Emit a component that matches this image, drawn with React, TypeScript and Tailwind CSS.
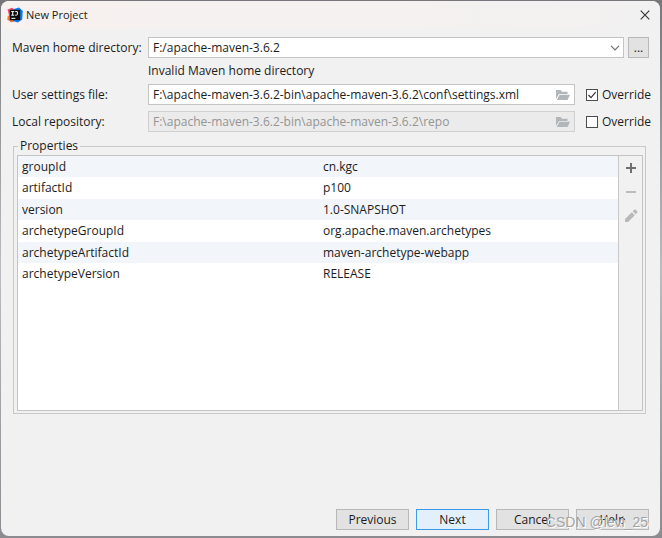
import { useState } from "react";
import type { ReactNode } from "react";
import { clsx } from "clsx";

const properties = [
  { name: "groupId", value: "cn.kgc" },
  { name: "artifactId", value: "p100" },
  { name: "version", value: "1.0-SNAPSHOT" },
  { name: "archetypeGroupId", value: "org.apache.maven.archetypes" },
  { name: "archetypeArtifactId", value: "maven-archetype-webapp" },
  { name: "archetypeVersion", value: "RELEASE" },
];

function AppLogo() {
  return (
    <svg viewBox="0 0 16 16" className="h-4 w-4" aria-hidden="true">
      <path d="M.5 2.5 5 .8 8 3v11l-3.5 1.2L.5 12.5 2 8z" fill="#f9456b" />
      <path d="M.5 9.5 3 8l4 6-2.5 1.2-4-2.7z" fill="#f9772e" />
      <path d="M7 2 12 .5l3.8 3.4-.6 8.6-4.4 3L6 14z" fill="#087cfa" />
      <rect x="2.8" y="2.8" width="10.4" height="10.4" fill="#0a0a0a" />
      <path d="M4.2 4.6h3M5.7 4.6v3.6M4.2 8.2h3M8.2 4.6h2.2v2.6q0 1-1.1 1H8.2M4.4 11.3h4" stroke="#fff" strokeWidth="1" fill="none" />
    </svg>
  );
}

function FolderIcon() {
  return (
    <svg viewBox="0 0 14 12" className="h-3 w-3.5" fill="#b1b6ba" aria-hidden="true">
      <path d="M0 10V1h4.5L6 2.7h5.5V5H3z" />
      <path d="M3.5 5.8H14L11.5 11H.8z" />
    </svg>
  );
}

function PathField({ id, label, path, initial }: { id: string; label: string; path: string; initial: boolean }) {
  const [override, setOverride] = useState(initial);

  return (
    <div className="flex items-center">
      <label htmlFor={id} className="w-[136px] shrink-0">
        {label}
      </label>
      <div
        className={clsx(
          "flex h-[21px] min-w-0 flex-1 items-center border pr-1",
          override ? "border-[#c4c4c4] bg-white" : "border-[#d0d0d0] bg-[#ebebeb]"
        )}
      >
        <input
          id={id}
          type="text"
          defaultValue={path}
          disabled={!override}
          className="h-full min-w-0 flex-1 bg-transparent pl-1 outline-none disabled:text-[#949494]"
        />
        <button type="button" aria-label="Browse">
          <FolderIcon />
        </button>
      </div>
      <label className="ml-[11px] flex w-[63px] shrink-0 items-center gap-1">
        <span className="grid shrink-0">
          <input
            type="checkbox"
            checked={override}
            onChange={(e) => setOverride(e.target.checked)}
            className="peer col-start-1 row-start-1 h-3 w-3 appearance-none border border-[#4c4c4c] bg-white"
          />
          <svg viewBox="0 0 12 12" className="pointer-events-none invisible col-start-1 row-start-1 h-3 w-3 peer-checked:visible">
            <path d="M2.5 6 5 8.7 9.7 3.2" fill="none" stroke="#333" strokeWidth="1.2" />
          </svg>
        </span>
        Override
      </label>
    </div>
  );
}

function ToolButton({ label, disabled, children }: { label: string; disabled?: boolean; children: ReactNode }) {
  return (
    <button type="button" aria-label={label} disabled={disabled} className="flex h-6 w-full items-center justify-center">
      <svg viewBox="0 0 14 14" className="h-3.5 w-3.5" aria-hidden="true">
        {children}
      </svg>
    </button>
  );
}

function DialogButton({ primary, children }: { primary?: boolean; children: ReactNode }) {
  return (
    <button
      type="button"
      className={clsx(
        "h-[21px] w-[73px] border",
        primary ? "border-[#3c9be8] bg-[#e2f0fb]" : "border-[#b8b8b8] bg-[#e2e2e2]"
      )}
    >
      {children}
    </button>
  );
}

export default function App() {
  return (
    <div className="flex min-h-screen bg-linear-to-b from-[#77777b] via-[#b9bcc0] to-[#8b8b90] pt-px pr-0.5 pb-0.5 pl-px font-['Open_Sans','Noto_Sans',sans-serif] text-xs leading-4 text-[#1c1c1c]">
      <div className="relative flex flex-1 flex-col overflow-hidden rounded-lg bg-[#f1f1f1]">
        <header className="flex h-7 items-center bg-linear-to-r from-[#f7f1ef] to-[#f2f1f1] pr-2.5 pl-1.5">
          <AppLogo />
          <h1 className="ml-[3px] flex-1 text-[11px] font-normal">New Project</h1>
          <button type="button" aria-label="Close">
            <svg viewBox="0 0 10 10" className="h-2.5 w-2.5" stroke="#333" strokeWidth="1.1">
              <path d="M.7.7 9.3 9.3M9.3.7.7 9.3" />
            </svg>
          </button>
        </header>

        <main className="flex flex-1 flex-col pt-2 pr-[11px] pb-1.5 pl-[11px]">
          <div className="flex items-center">
            <label htmlFor="maven-home" className="w-[136px] shrink-0">
              Maven home directory:
            </label>
            <div className="grid min-w-0 flex-1 items-center">
              <select
                id="maven-home"
                className="col-start-1 row-start-1 h-[21px] w-full appearance-none border border-[#c4c4c4] bg-white pl-1 outline-none"
              >
                <option>F:/apache-maven-3.6.2</option>
              </select>
              <svg viewBox="0 0 10 6" className="pointer-events-none col-start-1 row-start-1 mr-1 h-1.5 w-2.5 justify-self-end">
                <path d="M1 .8 5 4.8 9 .8" fill="none" stroke="#707070" strokeWidth="1.2" />
              </svg>
            </div>
            <button type="button" aria-label="Choose directory" className="ml-1 h-[21px] w-[21px] border border-[#b8b8b8] bg-[#e2e2e2]">
              ...
            </button>
          </div>
          <p className="my-[5px] ml-[136px]">Invalid Maven home directory</p>

          <div className="flex flex-col gap-1.5">
            <PathField
              id="settings-file"
              label="User settings file:"
              path="F:\apache-maven-3.6.2-bin\apache-maven-3.6.2\conf\settings.xml"
              initial={true}
            />
            <PathField
              id="local-repo"
              label="Local repository:"
              path="F:\apache-maven-3.6.2-bin\apache-maven-3.6.2\repo"
              initial={false}
            />
          </div>

          <fieldset className="mt-1.5 mr-[3px] ml-px border border-[#c8c8c8] pt-px pr-0.5 pb-0.5 pl-[3px]">
            <legend className="ml-px px-0.5">Properties</legend>
            <div className="flex min-h-64 border border-[#c4c4c4] bg-white">
              <div className="flex-1">
                <table className="w-full table-fixed border-collapse">
                  <tbody>
                    {properties.map((p) => (
                      <tr key={p.name} className="h-[21px] odd:bg-[#f2f5fa] even:h-[22px]">
                        <th scope="row" className="py-0 pl-1 text-left font-normal">
                          {p.name}
                        </th>
                        <td className="py-0 pl-[5px]">{p.value}</td>
                      </tr>
                    ))}
                  </tbody>
                </table>
              </div>
              <div className="w-6 border-l border-[#c8c8c8] bg-[#f1f1f1]">
                <ToolButton label="Add">
                  <path d="M7 2v10M2 7h10" stroke="#6e6e6e" strokeWidth="2" />
                </ToolButton>
                <ToolButton label="Remove" disabled>
                  <path d="M2 7h10" stroke="#bcbcbc" strokeWidth="2" />
                </ToolButton>
                <ToolButton label="Edit" disabled>
                  <path d="M1 13v-3l6.8-6.8 3 3L4 13zM8.7 2.3l1.5-1.5q.8-.6 1.5 0l1.5 1.5q.6.7 0 1.5l-1.5 1.5z" fill="#b8b8b8" />
                </ToolButton>
              </div>
            </div>
          </fieldset>

          <footer className="mt-auto flex justify-end gap-[7px]">
            <DialogButton>Previous</DialogButton>
            <DialogButton primary>Next</DialogButton>
            <DialogButton>Cancel</DialogButton>
            <DialogButton>Help</DialogButton>
          </footer>
        </main>

        <span className="pointer-events-none absolute right-3 bottom-1 font-['Liberation_Sans',Arial,sans-serif] text-sm text-[#a3a3a3] [text-shadow:1px_1px_0_#fff]">
          CSDN @levi_25
        </span>
      </div>
    </div>
  );
}
